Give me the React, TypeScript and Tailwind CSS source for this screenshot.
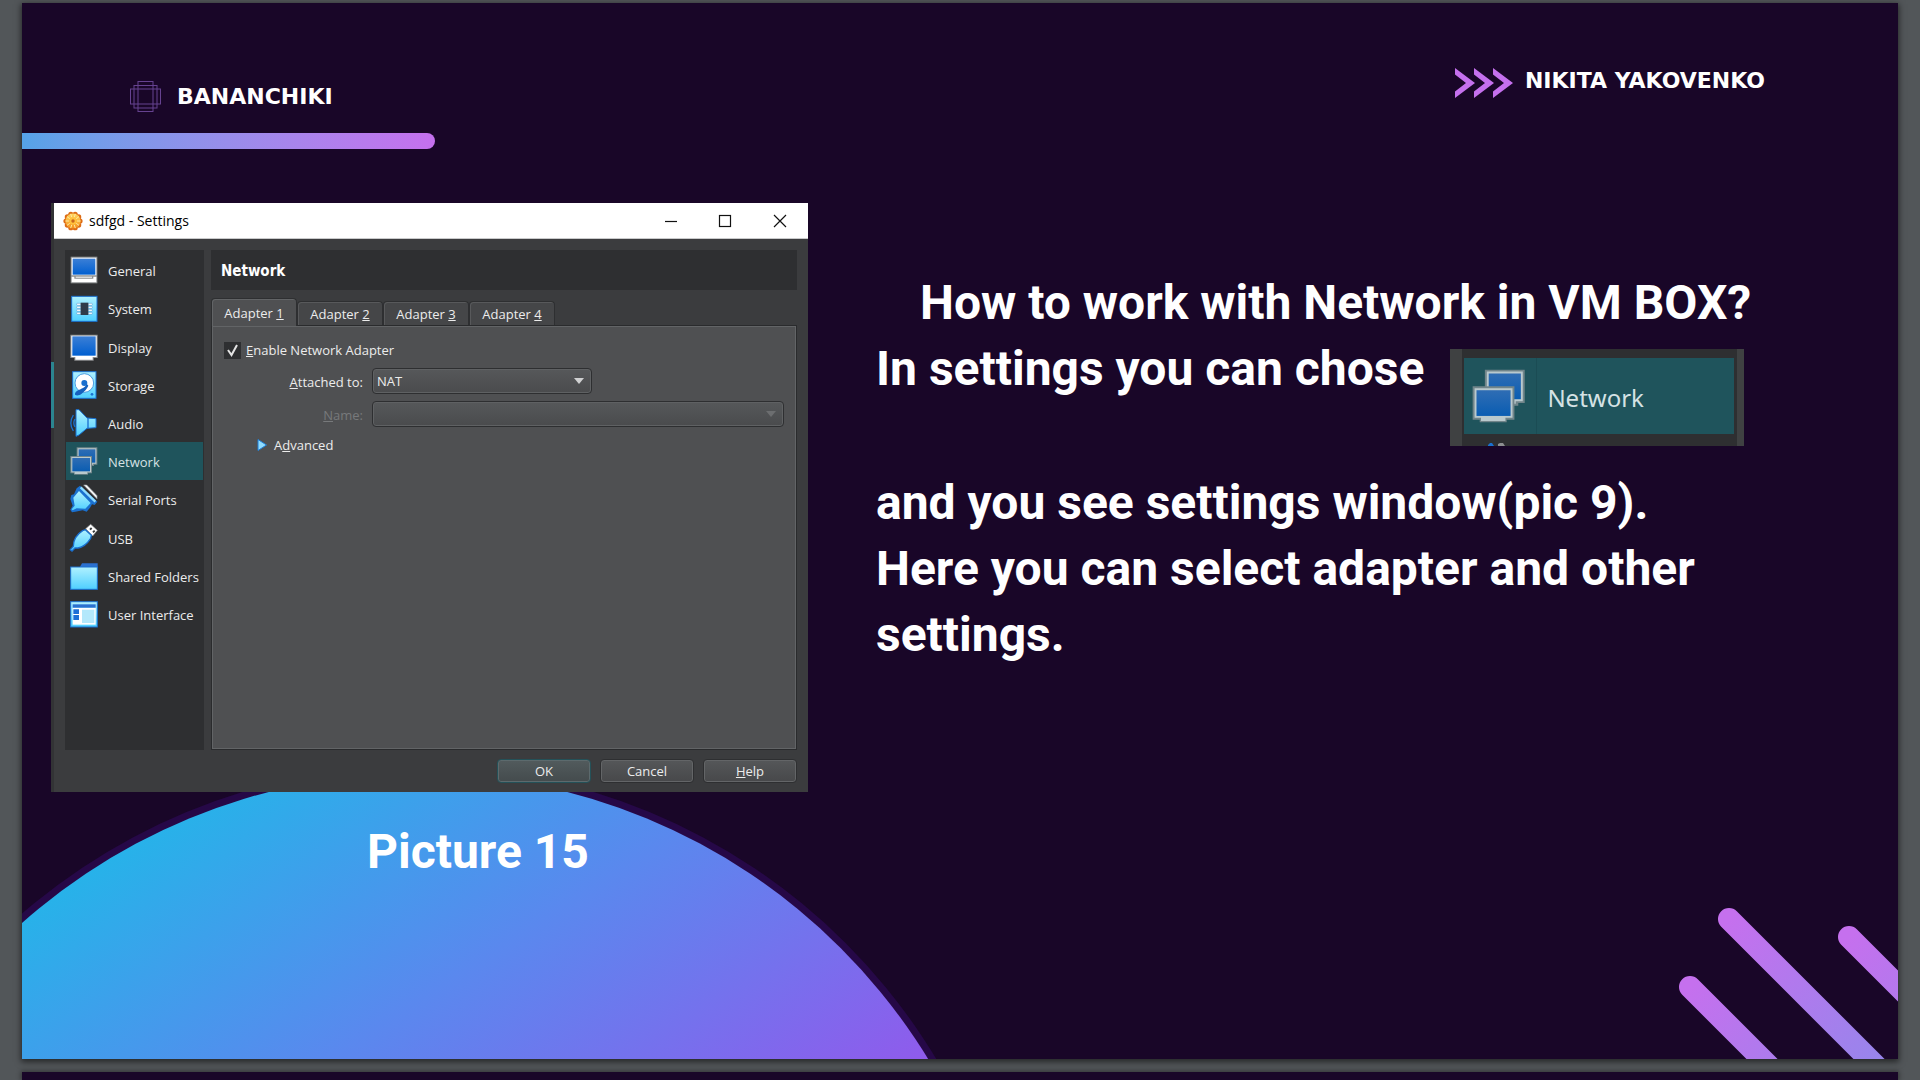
import React from "react";

type IconProps = { children: React.ReactNode; size?: string };

function Icon({ children, size = "size-7" }: IconProps) {
  return (
    <svg viewBox="0 0 84 84" className={`${size} shrink-0 overflow-visible`} aria-hidden="true">
      <defs>
        <linearGradient id="screen" x1="0" y1="0" x2="0" y2="1">
          <stop offset="0" stopColor="#3b7fd6" />
          <stop offset="1" stopColor="#005fd0" />
        </linearGradient>
        <linearGradient id="screenDim" x1="0" y1="0" x2="0" y2="1">
          <stop offset="0" stopColor="#2f6db4" />
          <stop offset="1" stopColor="#0a5db2" />
        </linearGradient>
        <linearGradient id="sky" x1="0" y1="0" x2="0" y2="1">
          <stop offset="0" stopColor="#b0f1ff" />
          <stop offset="1" stopColor="#4fcfff" />
        </linearGradient>
      </defs>
      {children}
    </svg>
  );
}

const GeneralIcon = (
  <Icon>
    <path d="M2 2h80v80H2z" fill="#8d8f90" />
    <path d="M5 5h74v53H5zM5 62h8v6h57v-6h9v17H5z" fill="#fff" />
    <path d="M17 62h49v3H17z" fill="#fff" />
    <rect x="8" y="8" width="68" height="48" fill="url(#screen)" />
  </Icon>
);
const SystemIcon = (
  <Icon>
    <rect x="5" y="7" width="76" height="75" fill="url(#sky)" stroke="#1a70cf" strokeWidth="3" />
    <g fill="#fff" stroke="#4b8fc8" strokeWidth="1.5">
      {[28, 37, 46, 55].map((y) => (
        <React.Fragment key={y}>
          <rect x="20" y={y} width="13" height="6" rx="2" />
          <rect x="54" y={y} width="13" height="6" rx="2" />
        </React.Fragment>
      ))}
    </g>
    <rect x="32" y="26" width="23" height="37" fill="#2f3b4a" />
  </Icon>
);
const DisplayIcon = (
  <Icon>
    <path d="M1 5h82v70H71v8H13v-8H1z" fill="#8d8f90" />
    <path d="M4 8h76v64H68v8H16v-8H4z" fill="#fff" />
    <rect x="7" y="10" width="70" height="58" fill="url(#screen)" />
  </Icon>
);
const StorageIcon = (
  <Icon>
    <rect x="8" y="2" width="70" height="80" fill="url(#sky)" stroke="#1a70cf" strokeWidth="3" />
    <circle cx="43" cy="36" r="28" fill="#fff" stroke="#4b9be0" strokeWidth="3" />
    <path d="M48 36c2 12-10 16-20 20-10 4-14 9-13 15 5 4 14 2 20-3 8-7 16-14 20-24z" fill="#1560bd" />
    <circle cx="43" cy="36" r="9" fill="#1a70cf" />
    <circle cx="66" cy="70" r="4" fill="#1a70cf" />
  </Icon>
);
const AudioIcon = (
  <Icon>
    <path d="M10 18Q-5 42 10 66M15 30Q8 42 15 54" fill="none" stroke="#1a70cf" strokeWidth="4" />
    <path d="M18 2h9l24 25 27 2v27l-27 2-24 20-9 4z" fill="url(#sky)" stroke="#1a70cf" strokeWidth="3" />
    <path d="M54 27v31" stroke="#1a70cf" strokeWidth="4" />
  </Icon>
);

function Monitors({ size }: { size?: string }) {
  return (
    <Icon size={size}>
      <path d="M20 1h62v52H72v4H30v-4H20z" fill="#71858a" />
      <path d="M23 4h56v46H68v4H32v-4h-9z" fill="#b9c9cd" />
      <rect x="26" y="7" width="50" height="40" fill="url(#screenDim)" />
      <path d="M1 27h65v52H54v4H12v-4H1z" fill="#71858a" />
      <path d="M4 30h59v46H52v5H14v-5H4z" fill="#b9c9cd" />
      <rect x="7" y="33" width="53" height="40" fill="url(#screenDim)" />
    </Icon>
  );
}

const SerialIcon = (
  <Icon>
    <path d="M30 2 82 50 74 60 66 58 60 68 50 80 38 76 16 80 6 82 1 74 8 62 1 42 4 30 12 28 20 10z" fill="#1a70cf" />
    <path d="M41 0h9l31 32v9z" fill="#fff" stroke="#9aa0a4" strokeWidth="2" />
    <path d="M32 7 76 50" stroke="#8edcff" strokeWidth="7" />
    <path d="M27 18 62 54 46 71 20 70 8 76 5 73 14 62 10 38z" fill="url(#sky)" />
  </Icon>
);
const UsbIcon = (
  <Icon>
    <path d="M47 14 62 1 82 19 68 36z" fill="#fff" stroke="#8d8f90" strokeWidth="2" />
    <path d="m58 15 5-5 4 4-5 5zm9 8 5-5 4 4-5 5z" fill="#35383a" />
    <path d="M38 20 46 17 64 34 62 43Q46 68 24 72L15 72 6 81 1 77 10 67Q10 38 38 20z" fill="url(#sky)" stroke="#1a70cf" strokeWidth="4" />
  </Icon>
);
const FolderIcon = (
  <Icon>
    <path d="M30 14 36 4h47v20H30z" fill="#2b70cf" />
    <rect x="2" y="15" width="80" height="67" fill="url(#sky)" stroke="#1a70cf" strokeWidth="3" />
  </Icon>
);
const UiIcon = (
  <Icon>
    <rect x="2" y="5" width="80" height="76" fill="url(#sky)" stroke="#1a70cf" strokeWidth="3" />
    <rect x="8" y="13" width="69" height="10" fill="#2b70cf" />
    <rect x="8" y="24" width="69" height="50" fill="#fff" />
    <path d="M10 28h17v14H10zM10 45h17v15H10z" fill="#1a6fd6" />
    <rect x="36" y="29" width="37" height="40" fill="#b3e8fb" />
  </Icon>
);

const sections = [
  { name: "General", icon: GeneralIcon },
  { name: "System", icon: SystemIcon },
  { name: "Display", icon: DisplayIcon },
  { name: "Storage", icon: StorageIcon },
  { name: "Audio", icon: AudioIcon },
  { name: "Network", icon: <Monitors /> },
  { name: "Serial Ports", icon: SerialIcon },
  { name: "USB", icon: UsbIcon },
  { name: "Shared Folders", icon: FolderIcon },
  { name: "User Interface", icon: UiIcon },
];

function GearIcon() {
  const petals = Array.from({ length: 10 }, (_, i) => (i * Math.PI) / 5);
  return (
    <svg viewBox="0 0 20 20" className="size-5" aria-hidden="true">
      <defs>
        <linearGradient id="gear" x1="0" y1="0" x2="0" y2="1">
          <stop offset="0" stopColor="#ffd75e" />
          <stop offset="1" stopColor="#f5921e" />
        </linearGradient>
      </defs>
      {petals.map((a) => (
        <circle key={a} cx={10 + 7 * Math.cos(a)} cy={10 + 7 * Math.sin(a)} r="2.6" fill="#dd6b14" />
      ))}
      <circle cx="10" cy="10" r="7.6" fill="url(#gear)" />
      <g stroke="#ffe9a0" strokeWidth="1">
        {petals.map((a) => (
          <path key={a} d={`M${10 + 4 * Math.cos(a)} ${10 + 4 * Math.sin(a)}L${10 + 7.5 * Math.cos(a)} ${10 + 7.5 * Math.sin(a)}`} />
        ))}
      </g>
      <circle cx="10" cy="10" r="3.6" fill="#ffc23d" />
      <circle cx="10" cy="10" r="1.7" fill="#c9661c" />
    </svg>
  );
}

function TitleBar() {
  return (
    <div className="flex h-9 items-center justify-between border-b border-[#c9cacb] bg-white pl-[9px] text-black">
      <div className="flex items-center gap-1.5">
        <GearIcon />
        <span className="text-sm">sdfgd - Settings</span>
      </div>
      <div className="flex h-full">
        <button aria-label="Minimize" className="grid w-[54px] place-items-center">
          <svg viewBox="0 0 14 14" className="size-3.5"><path d="M1 7.5h12" stroke="#111" strokeWidth="1.2" /></svg>
        </button>
        <button aria-label="Maximize" className="grid w-[54px] place-items-center">
          <svg viewBox="0 0 14 14" className="size-3.5"><rect x="1.5" y="1.5" width="11" height="11" fill="none" stroke="#111" strokeWidth="1.2" /></svg>
        </button>
        <button aria-label="Close" className="grid w-14 place-items-center">
          <svg viewBox="0 0 14 14" className="size-3.5"><path d="m1 1 12 12M13 1 1 13" stroke="#111" strokeWidth="1.2" /></svg>
        </button>
      </div>
    </div>
  );
}

function SelectArrow({ dim }: { dim?: boolean }) {
  return (
    <svg viewBox="0 0 10 6" className="pointer-events-none absolute top-1/2 right-2 h-1.5 w-2.5 -translate-y-1/2">
      <path d="M0 0h10L5 6z" fill={dim ? "#6c6e70" : "#d0d1d2"} />
    </svg>
  );
}

const selectClass =
  "h-[26px] w-full appearance-none rounded border border-[#2e2f31] bg-linear-to-b from-[#56585a] to-[#4a4b4d] px-1 text-[13px] text-[#ececec] opacity-100 shadow-[inset_0_0_0_1px_#5f6163]";

function NetworkPane() {
  return (
    <div className="flex-1 border border-[#2a2b2d] bg-[#4f5052] pt-3.5 pl-3 shadow-[inset_0_0_0_1px_#626466]">
      <div className="flex items-center gap-[5px]">
        <span className="relative grid">
          <input id="enable" type="checkbox" defaultChecked className="size-[17px] appearance-none bg-[#2e2f31]" />
          <svg viewBox="0 0 17 17" className="pointer-events-none absolute inset-0 size-[17px]">
            <path d="m4 8 3.500 5L13 3" fill="none" stroke="#e4e4e4" strokeWidth="2" />
          </svg>
        </span>
        <label htmlFor="enable"><u>E</u>nable Network Adapter</label>
      </div>
      <div className="mt-2 grid grid-cols-[139px_1fr] items-center gap-x-[9px] gap-y-[7px] pr-3">
        <label htmlFor="attached" className="pt-0.5 text-right"><u>A</u>ttached to:</label>
        <div className="relative w-[220px]">
          <select id="attached" className={selectClass}><option>NAT</option></select>
          <SelectArrow />
        </div>
        <label htmlFor="name" className="pt-0.5 text-right text-[#77797b]"><u>N</u>ame:</label>
        <div className="relative">
          <select id="name" disabled className={selectClass}><option></option></select>
          <SelectArrow dim />
        </div>
      </div>
      <button className="mt-2 ml-[33px] flex items-center gap-[7px]">
        <svg viewBox="0 0 10 12" className="h-3 w-2.5"><path d="M1 .5 9.500 6 1 11.500z" fill="#8fdcff" stroke="#1f7fd8" /></svg>
        <span>A<u>d</u>vanced</span>
      </button>
    </div>
  );
}

function SettingsWindow() {
  return (
    <div className="flex h-[589px] bg-[#3b3c3e] font-['Open_Sans',sans-serif] text-[13px] leading-5 font-normal text-[#ececec]">
      <div className="flex w-[3px] flex-col bg-[#323335] pt-[159px]">
        <div className="h-[66px] bg-[#2b8590]" />
      </div>
      <div className="flex flex-1 flex-col">
        <TitleBar />
        <div className="flex flex-1 gap-[7px] pt-[11px] pr-[11px] pl-[11px]">
          <nav className="w-[139px] bg-[#2e2f31] px-px pt-px">
            <ul className="flex h-[382px] flex-col">
              {sections.map(({ name, icon }) => (
                <li key={name} className="flex flex-1">
                  <button
                    className={
                      name === "Network"
                        ? "flex flex-1 items-center gap-2.5 bg-[#1f545c] pl-1 whitespace-nowrap text-[#d5e2e4]"
                        : "flex flex-1 items-center gap-2.5 pl-1 whitespace-nowrap"
                    }
                  >
                    {icon}
                    <span className="pt-0.5">{name}</span>
                  </button>
                </li>
              ))}
            </ul>
          </nav>
          <section className="flex flex-1 flex-col">
            <h2 className="h-10 bg-[#2e2f31] pl-2.5 font-['DejaVu_Sans_Condensed','DejaVu_Sans',sans-serif] text-[15px] leading-[42px] font-bold text-white">
              Network
            </h2>
            <div role="tablist" className="-mb-px flex items-end pt-2">
              {[1, 2, 3, 4].map((n) => (
                <button
                  key={n}
                  role="tab"
                  aria-selected={n === 1}
                  className={
                    n === 1
                      ? "z-10 h-[28px] w-[86px] rounded-t border border-b-0 border-[#2e2f31] bg-[#4f5052] shadow-[inset_1px_1px_0_#626466]"
                      : "h-[25px] w-[86px] rounded-t border border-b-0 border-[#2e2f31] bg-[#454648] shadow-[inset_1px_1px_0_#58595b]"
                  }
                >
                  Adapter <u>{n}</u>
                </button>
              ))}
            </div>
            <NetworkPane />
          </section>
        </div>
        <div className="flex h-[42px] items-start justify-end gap-[9px] pt-[9px] pr-[11px]">
          <button className="h-6 w-[94px] rounded-sm border border-[#245158] bg-linear-to-b from-[#525b5d] to-[#444b4d] shadow-[inset_0_0_0_1px_#5c6a6d]">OK</button>
          <button className="h-6 w-[94px] rounded-sm border border-[#2e2f31] bg-linear-to-b from-[#555759] to-[#47484a] shadow-[inset_0_0_0_1px_#636567]">Cancel</button>
          <button className="h-6 w-[94px] rounded-sm border border-[#2e2f31] bg-linear-to-b from-[#555759] to-[#47484a] shadow-[inset_0_0_0_1px_#636567]"><u>H</u>elp</button>
        </div>
      </div>
    </div>
  );
}

function Backdrop() {
  return (
    <>
      <svg viewBox="0 0 930 300" className="absolute bottom-0 left-0 h-[300px] w-[930px]" aria-hidden="true">
        <defs>
          <linearGradient id="disc" gradientUnits="userSpaceOnUse" x1="70" y1="110" x2="404" y2="624">
            <stop offset="0" stopColor="#27b2e9" />
            <stop offset="0.47" stopColor="#5a88ee" />
            <stop offset="1" stopColor="#8f5bec" />
          </linearGradient>
        </defs>
        <circle cx="396" cy="612" r="605" fill="#260847" />
        <circle cx="396" cy="612" r="598" fill="url(#disc)" />
      </svg>
      <svg viewBox="0 0 240 170" className="absolute right-0 bottom-0 h-[170px] w-[240px]" aria-hidden="true">
        <defs>
          {[
            ["a", 32, 98],
            ["b", 71, 30],
            ["c", 191, 48],
          ].map(([id, x, y]) => (
            <linearGradient key={id} id={`ray-${id}`} gradientUnits="userSpaceOnUse" x1={x} y1={y} x2={Number(x) + 360} y2={Number(y) + 360}>
              <stop offset="0" stopColor="#c570ee" />
              <stop offset="1" stopColor="#55a3e8" />
            </linearGradient>
          ))}
        </defs>
        <g strokeWidth="22" strokeLinecap="round">
          <path d="M32 98l300 300" stroke="url(#ray-a)" />
          <path d="M71 30l300 300" stroke="url(#ray-b)" />
          <path d="M191 48l300 300" stroke="url(#ray-c)" />
        </g>
      </svg>
    </>
  );
}

function SlideHeader() {
  return (
    <header className="flex items-start justify-between font-['DejaVu_Sans',sans-serif] text-[22px] leading-[30px] font-bold text-white">
      <div className="flex w-[413px] flex-col gap-[21px] pt-[78px]">
        <div className="flex items-center gap-4 pl-[108px]">
          <svg viewBox="0 0 31 31" className="size-[31px]" fill="none" stroke="#664290" aria-hidden="true">
            <rect x="0.500" y="8" width="30" height="15" />
            <rect x="4" y="4.500" width="23" height="22.500" />
            <rect x="8" y="0.500" width="15" height="30" />
          </svg>
          <span>BANANCHIKI</span>
        </div>
        <div className="h-4 rounded-r-full bg-linear-to-r from-[#55a3e8] to-[#c570ee]" />
      </div>
      <div className="flex items-start gap-3 pt-[65px] pr-[133px]">
        <svg viewBox="0 0 58 30" className="h-[30px] w-[58px]" fill="#c570ee" aria-hidden="true">
          <path d="M0 0v6.500L11 15 0 23.500V30L20 15z" />
          <path d="M19 0v6.500L30 15 19 23.500V30L39 15z" />
          <path d="M38 0v6.500L49 15 38 23.500V30L58 15z" />
        </svg>
        <span className="leading-[26px]">NIKITA YAKOVENKO</span>
      </div>
    </header>
  );
}

function NetworkSnippet() {
  return (
    <div className="mt-[13px] flex h-[97px] w-[294px] shrink-0 flex-col overflow-hidden border-r-[7px] border-l-[12px] border-[#3f4142] bg-[#2e2f31] pt-[9px] pr-[3px] pl-0.5 font-['Noto_Sans',sans-serif] text-2xl font-normal text-[#d5e2e4]">
      <div className="flex h-[76px] shrink-0 bg-[#1f545c]">
        <div className="flex w-[73px] items-center border-r border-[#1b4c54] pl-2">
          <Monitors size="size-[54px]" />
        </div>
        <span className="pl-2.5 leading-[80px]">Network</span>
      </div>
      <svg viewBox="0 0 40 3" className="mt-[9px] ml-4 h-[3px] w-10"><path d="M8 3V2l2-2h2l2 3z" fill="#1a70cf" /><path d="M18 3V1l2-1h3l2 3z" fill="#8d8f90" /></svg>
    </div>
  );
}

export default function App() {
  return (
    <div className="flex h-screen flex-col gap-[13px] overflow-hidden bg-[#525659] px-[22px] pt-[3px]">
      <main className="relative flex-1 overflow-hidden bg-[#190628] shadow-[0_2px_6px_1px_rgba(0,0,0,0.55)]">
        <Backdrop />
        <div className="relative">
          <SlideHeader />
          <div className="mt-[54px] flex items-start gap-[68px] pl-[29px] font-[Roboto,sans-serif] text-5xl leading-[66px] font-bold text-white">
            <figure className="w-[757px] shrink-0">
              <SettingsWindow />
              <figcaption className="pt-[27px] pl-[316px]">Picture 15</figcaption>
            </figure>
            <article className="max-w-[880px] flex-1 pt-[67px] leading-[66px]">
              <h1 className="indent-[44px]">How to work with Network in VM BOX?</h1>
              <div className="flex h-[134px] items-start gap-[26px]">
                <p>In settings you can chose</p>
                <NetworkSnippet />
              </div>
              <p>and you see settings window(pic 9).</p>
              <p>Here you can select adapter and other settings.</p>
            </article>
          </div>
        </div>
      </main>
      <div className="h-2 shrink-0 bg-[#190628] shadow-[0_0_5px_1px_rgba(0,0,0,0.4)]" />
    </div>
  );
}
